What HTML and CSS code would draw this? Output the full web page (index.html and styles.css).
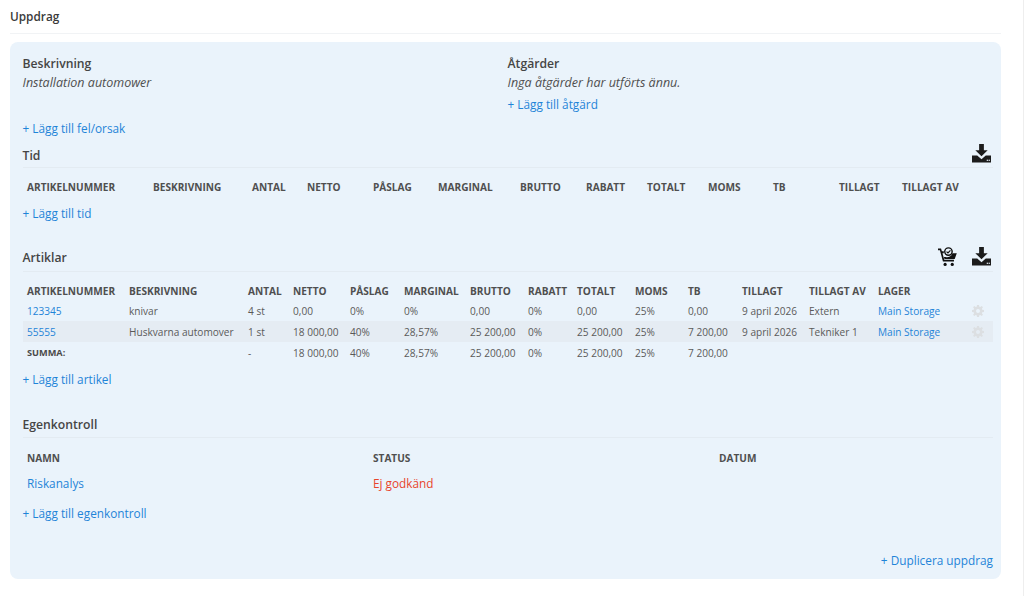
FILE: index.html
```html
<!DOCTYPE html>
<html lang="sv">
<head>
<meta charset="utf-8">
<title>Uppdrag</title>
<link rel="stylesheet" href="styles.css">
</head>
<body>
<svg class="defs" width="0" height="0" aria-hidden="true">
  <symbol id="dl" viewBox="0 0 20 20">
    <path d="M7.500 0h5v6.500h4L10 13 3.500 6.500h4z"/>
    <path d="M0 12h5.500L10 16l4.500-4H20v7.500H0z"/>
    <rect x="15.500" y="16.500" width="1.300" height="1.300" fill="#eaf3fb"/>
    <rect x="17.500" y="16.500" width="1.300" height="1.300" fill="#eaf3fb"/>
  </symbol>
  <symbol id="cart" viewBox="0 0 20 20">
    <path d="M0 1.500h3.200l.9 3h2v2H4.700l1.900 7h10.200v1.800H5.200L2 3.300H0z"/>
    <path d="M15.200 6.500H19.800L17.600 12.500H6.800L6.200 10.600H8A6 6 0 0 0 15.200 6.500z"/>
    <circle cx="11" cy="4.800" r="3.900" fill="none" stroke="#111" stroke-width="1.500"/>
    <path d="M9 4.800l1.500 1.500 2.600-2.800" fill="none" stroke="#111" stroke-width="1.200"/>
    <circle cx="7.500" cy="18.300" r="1.700"/>
    <circle cx="15" cy="18.300" r="1.700"/>
  </symbol>
  <symbol id="gear" viewBox="0 0 12 12">
    <path fill-rule="evenodd" d="M5 0h2l.3 1.700 1 .4L9.800 1.100l1.100 1.100-1 1.500.4 1L12 5v2l-1.700.3-.4 1 1 1.500-1.100 1.100-1.500-1-1 .4L7 12H5l-.3-1.700-1-.4-1.500 1-1.100-1.100 1-1.500-.4-1L0 7V5l1.700-.3.4-1-1-1.500 1.100-1.100 1.500 1 1-.4zM6 4a2 2 0 1 0 0 4 2 2 0 0 0 0-4z"/>
  </symbol>
</svg>
<main class="page">
  <h1 class="page-title">Uppdrag</h1>
  <section class="panel">
    <div class="intro">
      <div class="intro-col">
        <h2 class="label">Beskrivning</h2>
        <p class="note">Installation automower</p>
      </div>
      <div class="intro-col">
        <h2 class="label">Åtgärder</h2>
        <p class="note">Inga åtgärder har utförts ännu.</p>
        <a class="add add-action" href="#">+ Lägg till åtgärd</a>
      </div>
    </div>
    <a class="add add-cause" href="#">+ Lägg till fel/orsak</a>

    <div class="section-head head-tid">
      <h2 class="label">Tid</h2>
      <div class="tools"><svg class="icon-dl"><use href="#dl"/></svg></div>
    </div>
    <table class="grid grid-tid">
      <colgroup>
        <col class="t1"><col class="t2"><col class="t3"><col class="t4"><col class="t5"><col class="t6"><col class="t7"><col class="t8"><col class="t9"><col class="t10"><col class="t11"><col class="t12"><col class="t13">
      </colgroup>
      <thead>
        <tr><th>ARTIKELNUMMER</th><th>BESKRIVNING</th><th>ANTAL</th><th>NETTO</th><th>PÅSLAG</th><th>MARGINAL</th><th>BRUTTO</th><th>RABATT</th><th>TOTALT</th><th>MOMS</th><th>TB</th><th>TILLAGT</th><th>TILLAGT AV</th></tr>
      </thead>
    </table>
    <a class="add add-time" href="#">+ Lägg till tid</a>

    <div class="section-head head-art">
      <h2 class="label">Artiklar</h2>
      <div class="tools">
        <svg class="icon-cart"><use href="#cart"/></svg>
        <svg class="icon-dl"><use href="#dl"/></svg>
      </div>
    </div>
    <table class="grid grid-art">
      <colgroup>
        <col class="a1"><col class="a2"><col class="a3"><col class="a4"><col class="a5"><col class="a6"><col class="a7"><col class="a8"><col class="a9"><col class="a10"><col class="a11"><col class="a12"><col class="a13"><col class="a14"><col class="a15">
      </colgroup>
      <thead>
        <tr><th>ARTIKELNUMMER</th><th>BESKRIVNING</th><th>ANTAL</th><th>NETTO</th><th>PÅSLAG</th><th>MARGINAL</th><th>BRUTTO</th><th>RABATT</th><th>TOTALT</th><th>MOMS</th><th>TB</th><th>TILLAGT</th><th>TILLAGT AV</th><th>LAGER</th><th></th></tr>
      </thead>
      <tbody>
        <tr><td><a href="#">123345</a></td><td>knivar</td><td>4 st</td><td>0,00</td><td>0%</td><td>0%</td><td>0,00</td><td>0%</td><td>0,00</td><td>25%</td><td>0,00</td><td>9 april 2026</td><td>Extern</td><td><a href="#">Main Storage</a></td><td class="gear-cell"><svg class="icon-gear"><use href="#gear"/></svg></td></tr>
        <tr class="band"><td><a href="#">55555</a></td><td>Huskvarna automover</td><td>1 st</td><td>18 000,00</td><td>40%</td><td>28,57%</td><td>25 200,00</td><td>0%</td><td>25 200,00</td><td>25%</td><td>7 200,00</td><td>9 april 2026</td><td>Tekniker 1</td><td><a href="#">Main Storage</a></td><td class="gear-cell"><svg class="icon-gear"><use href="#gear"/></svg></td></tr>
        <tr><td class="sum">SUMMA:</td><td></td><td>-</td><td>18 000,00</td><td>40%</td><td>28,57%</td><td>25 200,00</td><td>0%</td><td>25 200,00</td><td>25%</td><td>7 200,00</td><td></td><td></td><td></td><td></td></tr>
      </tbody>
    </table>
    <a class="add add-article" href="#">+ Lägg till artikel</a>

    <div class="section-head head-egen">
      <h2 class="label">Egenkontroll</h2>
    </div>
    <table class="grid grid-egen">
      <colgroup><col class="e1"><col class="e1"><col class="e3"></colgroup>
      <thead><tr><th>NAMN</th><th>STATUS</th><th>DATUM</th></tr></thead>
      <tbody><tr><td><a href="#">Riskanalys</a></td><td class="bad">Ej godkänd</td><td></td></tr></tbody>
    </table>
    <a class="add add-check" href="#">+ Lägg till egenkontroll</a>
    <div class="panel-foot"><a class="add" href="#">+ Duplicera uppdrag</a></div>
  </section>
</main>
</body>
</html>
```
FILE: styles.css
```css
* { box-sizing: border-box; }
html, body { margin: 0; padding: 0; height: 596px; overflow: hidden; background: #fff; }
body { font-family: "Open Sans", "Liberation Sans", sans-serif; color: #4a4a4a; font-size: 11.500px; border-right: 1px solid #eeeeee; }
.defs { display: block; height: 0; }
.page { padding: 0 22px 0 10px; }
.page-title { margin: 0; height: 34px; padding-top: 7px; font-size: 11.800px; line-height: 18px; font-weight: 600; color: #3a3a3a; border-bottom: 1px solid #f1f3f5; }
.panel { margin-top: 8px; height: 537px; padding: 14px 8px 0 12.500px; background: #eaf3fb; border-radius: 8px; display: flex; flex-direction: column; }
.intro { display: flex; }
.intro-col { width: 485px; display: flex; flex-direction: column; align-items: flex-start; }
.label { margin: 0; font-size: 12.200px; line-height: 16px; font-weight: 600; color: #454545; }
.note { margin: 3px 0 0; font-size: 12.500px; line-height: 16px; font-style: italic; color: #4f4f4f; }
a { color: #1f84d8; text-decoration: none; }
.add { display: block; align-self: flex-start; font-size: 11.800px; line-height: 16px; }
.add-action { margin-top: 5px; }
.add-cause { margin-top: 8px; }
.section-head { display: flex; justify-content: space-between; align-items: flex-end; border-bottom: 1px solid #e3ebf2; padding-bottom: 3px; }
.head-tid { margin-top: 7px; height: 25px; }
.head-tid .tools { margin-bottom: 1px; }
.head-art { margin-top: 23px; height: 28px; padding-bottom: 5px; }
.head-egen { margin-top: 26px; height: 25px; padding-bottom: 4px; }
.tools { display: flex; gap: 15px; align-items: flex-end; padding-right: 2px; }
.icon-dl { width: 19px; height: 19px; fill: #1c1c1c; display: block; }
.icon-cart { width: 19px; height: 19px; fill: #111; display: block; }
.icon-gear { width: 12px; height: 12px; fill: #dcdfe2; display: block; }
.grid { border-collapse: collapse; table-layout: fixed; width: 970px; }
.grid th { text-align: left; padding: 0 0 0 4.500px; font-size: 10.100px; line-height: 14px; font-weight: 700; color: #4f4f4f; white-space: nowrap; }
.grid td { padding: 0 0 0 4.500px; height: 21px; font-size: 10.100px; line-height: 14px; color: #5a5a5a; white-space: nowrap; }
.grid-tid { margin-top: 12px; }
.grid-tid th { height: 14px; }
.grid-art { margin-top: 9px; }
.grid-art th { height: 19px; }
.band td { background: #e5ecf3; }
.sum { font-size: 9.200px !important; font-weight: 700; color: #4a4a4a !important; }
.gear-cell { vertical-align: middle; }
.add-time { margin-top: 11px; }
.add-article { margin-top: 8px; }
.grid-egen { margin-top: 13px; }
.grid-egen td { font-size: 11.800px; height: 34px; padding-top: 2px; }
.grid-egen th { height: 14px; }
.bad { color: #e8442b !important; }
.add-check { margin-top: 6px; }
.panel-foot { margin-top: 31px; display: flex; justify-content: flex-end; }
.t1 { width: 126px; } .t2 { width: 99px; } .t3 { width: 55px; } .t4 { width: 66px; } .t5 { width: 65px; } .t6 { width: 82px; } .t7 { width: 66px; } .t8 { width: 61px; } .t9 { width: 61px; } .t10 { width: 65px; } .t11 { width: 66px; } .t12 { width: 63px; } .t13 { width: 95px; }
.a1 { width: 102px; } .a2 { width: 119px; } .a3 { width: 45px; } .a4 { width: 57px; } .a5 { width: 54px; } .a6 { width: 66px; } .a7 { width: 58px; } .a8 { width: 49px; } .a9 { width: 58px; } .a10 { width: 53px; } .a11 { width: 54px; } .a12 { width: 67px; } .a13 { width: 69px; } .a14 { width: 94px; } .a15 { width: 25px; }
.e1 { width: 346px; } .e3 { width: 278px; }
```
